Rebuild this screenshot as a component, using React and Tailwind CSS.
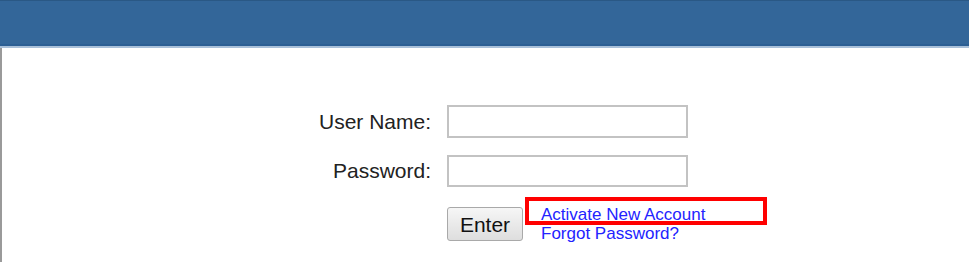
import React from 'react';

const App = () => {
  return (
    <div className="w-[969px] h-[262px] bg-white overflow-hidden" style={{ fontFamily: '"Liberation Sans", Arial, sans-serif' }}>
      {/* Header bar */}
      <div className="h-[48px] flex flex-col">
        <div className="h-[1px] bg-[#2a5885]"></div>
        <div className="flex-1 bg-[#336699]"></div>
        <div className="h-[2px] bg-[#2c5f94]"></div>
        <div className="h-[2px] bg-[#a9c0d9]"></div>
      </div>

      {/* Body */}
      <div className="h-[214px] border-l-2 border-[#9a9a9a] pt-[57px]">
        <div className="grid grid-cols-[429px_241px] gap-x-[16px] gap-y-[17px] items-center">
          <label className="text-right text-[21px] text-[#222]">User Name:</label>
          <input type="text" className="h-[33px] border-2 border-[#c3c3c3] bg-white outline-none" />

          <label className="text-right text-[21px] text-[#222]">Password:</label>
          <input type="password" className="h-[32px] border-2 border-[#c3c3c3] bg-white outline-none" />
        </div>

        <div className="flex items-start ml-[445px] mt-[20px]">
          <button className="w-[76px] h-[34px] rounded-[3px] border border-[#a9a9a9] bg-gradient-to-b from-[#f6f6f6] to-[#dedede] text-[21px] text-[#111] leading-none">
            Enter
          </button>
          <div className="relative ml-[18px] -mt-[2px]">
            <div className="text-[17px] leading-[19px] text-[#2323ff]">Activate New Account</div>
            <div className="text-[17px] leading-[19px] text-[#2323ff]">Forgot Password?</div>
            <div className="absolute left-[-16px] top-[-8px] w-[242px] h-[28px] border-4 border-[#ff0000]"></div>
          </div>
        </div>
      </div>
    </div>
  );
};

export default App;
